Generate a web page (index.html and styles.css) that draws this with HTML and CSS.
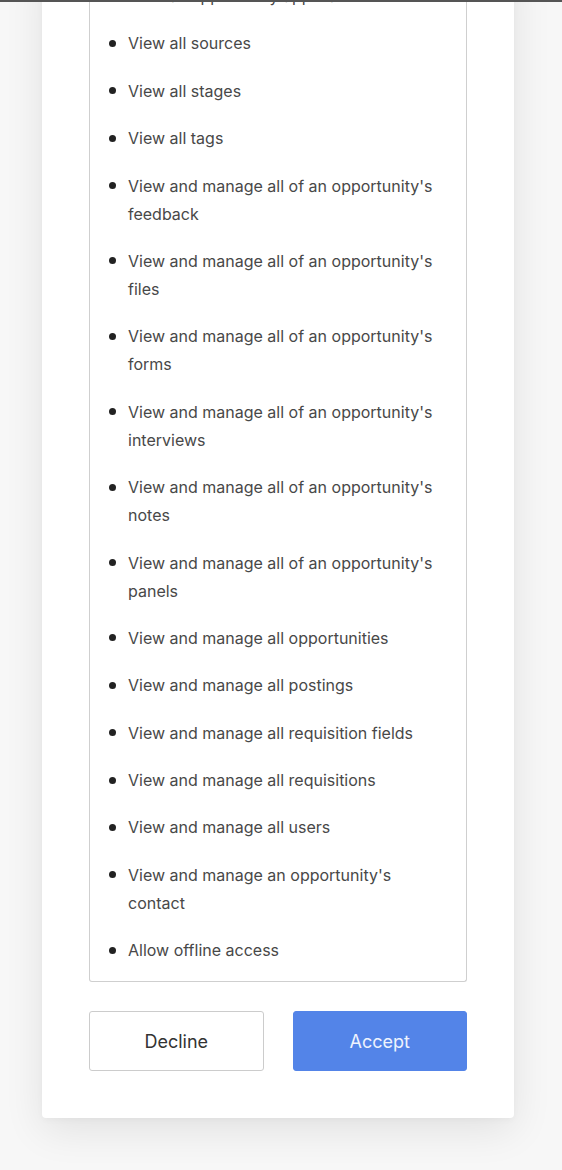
FILE: index.html
```html
<!DOCTYPE html>
<html lang="en">
<head>
<meta charset="utf-8">
<title>Authorize</title>
<link rel="stylesheet" href="styles.css">
</head>
<body>
<div class="topline"></div>
<main class="page">
  <section class="card">
    <ul class="scopes">
      <li>View all opportunity applications</li>
      <li>View all sources</li>
      <li>View all stages</li>
      <li>View all tags</li>
      <li>View and manage all of an opportunity's feedback</li>
      <li>View and manage all of an opportunity's files</li>
      <li>View and manage all of an opportunity's forms</li>
      <li>View and manage all of an opportunity's interviews</li>
      <li>View and manage all of an opportunity's notes</li>
      <li>View and manage all of an opportunity's panels</li>
      <li>View and manage all opportunities</li>
      <li>View and manage all postings</li>
      <li>View and manage all requisition fields</li>
      <li>View and manage all requisitions</li>
      <li>View and manage all users</li>
      <li>View and manage an opportunity's contact</li>
      <li>Allow offline access</li>
    </ul>
    <div class="actions">
      <button class="btn btn-decline" type="button">Decline</button>
      <button class="btn btn-accept" type="button">Accept</button>
    </div>
  </section>
</main>
</body>
</html>
```

FILE: styles.css
```css
html, body {
  margin: 0;
  padding: 0;
}
body {
  background: #f7f7f7;
  font-family: Inter, "Liberation Sans", Arial, sans-serif;
  color: #444;
  height: 1170px;
  overflow: hidden;
}
.topline {
  position: fixed;
  top: 0;
  left: 0;
  right: 0;
  height: 2px;
  background: #555;
  z-index: 10;
}
.page {
  padding: 0 48px 60px 42px;
}
.card {
  background: #fff;
  margin-top: -40px;
  padding: 0 47px 47px 47px;
  border-radius: 0 0 4px 4px;
  box-shadow: 0 12px 40px rgba(0, 0, 0, 0.09), 0 2px 6px rgba(0, 0, 0, 0.03);
}
.scopes {
  list-style: none;
  margin: 0;
  padding: 22px 20px 17px 38px;
  border: 1px solid #cfcfcf;
  border-top: none;
  border-radius: 0 0 3px 3px;
  display: flex;
  flex-direction: column;
  gap: 19.4px;
}
.scopes li {
  position: relative;
  font-size: 16px;
  line-height: 28px;
  color: #484848;
}
.scopes li::before {
  content: "";
  position: absolute;
  left: -19.5px;
  top: 10.5px;
  width: 7px;
  height: 7px;
  border-radius: 50%;
  background: #222;
}
.actions {
  display: flex;
  gap: 29px;
  margin-top: 29px;
}
.btn {
  flex: 1;
  height: 60px;
  font-family: Inter, "Liberation Sans", Arial, sans-serif;
  font-size: 18px;
  border-radius: 3px;
  cursor: pointer;
}
.btn-decline {
  background: #fff;
  color: #333;
  border: 1px solid #cccccc;
}
.btn-accept {
  background: #5384e8;
  color: #eef3fd;
  border: 1px solid #5384e8;
}
```
